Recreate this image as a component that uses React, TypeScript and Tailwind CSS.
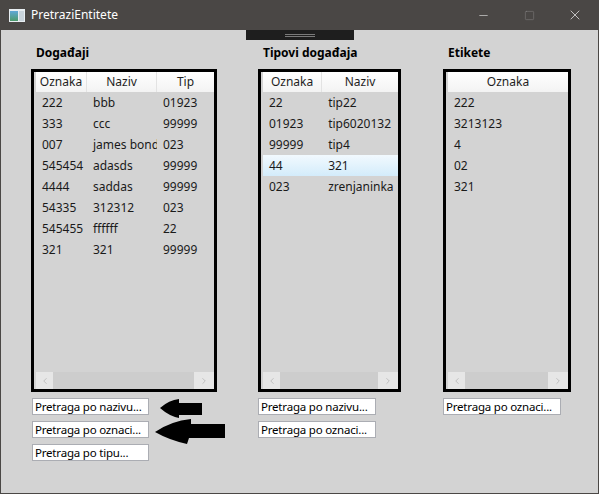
import { ChevronLeft, ChevronRight, Minus, Square, X } from 'lucide-react';

type Col = { title: string; width: number };

interface GridProps {
  columns: Col[];
  rows: string[][];
  selected?: number;
}

function Grid({ columns, rows, selected }: GridProps) {
  return (
    <div className="flex h-[323px] flex-col border-[3px] border-black pl-[2px]">
      <div className="flex h-[20px] bg-gradient-to-b from-white to-[#f3f3f3]">
        {columns.map((col, i) => (
          <div
            key={col.title}
            style={{ width: col.width }}
            className={`flex items-center justify-center text-[12px] text-[#1e1e1e] ${
              i < columns.length - 1 ? 'border-r border-[#e3e3e3]' : ''
            }`}
          >
            {col.title}
          </div>
        ))}
      </div>
      <div className="flex-1">
        {rows.map((row, r) => (
          <div
            key={r}
            className={`flex h-[21px] items-center text-[12px] text-[#1a1a1a] ${
              r === selected ? 'bg-gradient-to-b from-[#f2f9fe] to-[#d3ecfb]' : ''
            }`}
          >
            {row.map((cell, c) => (
              <div key={c} style={{ width: columns[c].width }} className="overflow-hidden pl-[6px] whitespace-nowrap">
                {cell}
              </div>
            ))}
          </div>
        ))}
      </div>
      <div className="flex h-[17px] bg-[#cdcdcd]">
        <div className="flex w-[17px] items-center justify-center bg-[#e6e6e6] text-[#a8a8a8]">
          <ChevronLeft size={10} strokeWidth={1.5} />
        </div>
        <div className="flex-1" />
        <div className="flex w-[20px] items-center justify-center bg-[#e6e6e6] text-[#a8a8a8]">
          <ChevronRight size={10} strokeWidth={1.5} />
        </div>
      </div>
    </div>
  );
}

function SearchBox({ text, width }: { text: string; width: number }) {
  return (
    <div
      style={{ width }}
      className="flex h-[17px] items-center overflow-hidden border border-[#abadb3] bg-white pl-[2px] text-[11.5px] leading-none tracking-[-0.2px] text-black whitespace-nowrap"
    >
      {text}
    </div>
  );
}

export default function App() {
  return (
    <div
      className="relative flex h-[494px] w-[599px] flex-col border-x border-b border-[#4a4745] bg-[#d3d3d3]"
      style={{ fontFamily: '"Noto Sans", "Open Sans", sans-serif' }}
    >
      <div className="flex h-[30px] shrink-0 items-center bg-[#4a4745] text-white">
        <svg width="16" height="13" viewBox="0 0 16 13" className="ml-[8px]">
          <defs>
            <linearGradient id="ic" x1="0" y1="0" x2="0" y2="1">
              <stop offset="0" stopColor="#5fa8d8" />
              <stop offset="1" stopColor="#4c9a6a" />
            </linearGradient>
          </defs>
          <rect x="0" y="0" width="16" height="13" fill="#e8eef2" />
          <rect x="1" y="2" width="8" height="10" fill="url(#ic)" />
          <rect x="10" y="2" width="5" height="10" fill="#c9d4dc" />
        </svg>
        <span className="ml-[6px] text-[12px]">PretraziEntitete</span>
        <div className="ml-auto flex h-full">
          <div className="flex w-[46px] items-center justify-center">
            <Minus size={13} strokeWidth={1} />
          </div>
          <div className="flex w-[46px] items-center justify-center text-[#8c8b8a]">
            <Square size={11} strokeWidth={1} />
          </div>
          <div className="flex w-[46px] items-center justify-center">
            <X size={16} strokeWidth={1} />
          </div>
        </div>
      </div>

      <div className="absolute left-[245px] top-[30px] flex h-[10px] w-[108px] flex-col items-center justify-center gap-[1px] bg-[#1e1e1e]">
        <div className="h-px w-[30px] bg-[#7a7a7a]" />
        <div className="h-px w-[30px] bg-[#7a7a7a]" />
      </div>

      <div className="flex pl-[30px] pt-[15px]">
        <div className="flex w-[186px] flex-col">
          <div className="mb-[8px] h-[16px] pl-[5px] text-[12px] font-bold leading-[16px] text-black">Događaji</div>
          <Grid
            columns={[
              { title: 'Oznaka', width: 51 },
              { title: 'Naziv', width: 70 },
              { title: 'Tip', width: 57 },
            ]}
            rows={[
              ['222', 'bbb', '01923'],
              ['333', 'ccc', '99999'],
              ['007', 'james bond', '023'],
              ['545454', 'adasds', '99999'],
              ['4444', 'saddas', '99999'],
              ['54335', '312312', '023'],
              ['545455', 'ffffff', '22'],
              ['321', '321', '99999'],
            ]}
          />
          <div className="mt-[6px] flex flex-col gap-[6px] pl-px">
            <SearchBox text="Pretraga po nazivu..." width={117} />
            <SearchBox text="Pretraga po oznaci..." width={117} />
            <SearchBox text="Pretraga po tipu..." width={117} />
          </div>
        </div>

        <div className="ml-[41px] flex w-[143px] flex-col">
          <div className="mb-[8px] h-[16px] pl-[5px] text-[12px] font-bold leading-[16px] text-black">
            Tipovi događaja
          </div>
          <Grid
            columns={[
              { title: 'Oznaka', width: 60 },
              { title: 'Naziv', width: 77 },
            ]}
            rows={[
              ['22', 'tip22'],
              ['01923', 'tip6020132'],
              ['99999', 'tip4'],
              ['44', '321'],
              ['023', 'zrenjaninka'],
            ]}
            selected={3}
          />
          <div className="mt-[6px] flex flex-col gap-[6px]">
            <SearchBox text="Pretraga po nazivu..." width={118} />
            <SearchBox text="Pretraga po oznaci..." width={118} />
          </div>
        </div>

        <div className="ml-[42px] flex w-[128px] flex-col">
          <div className="mb-[8px] h-[16px] pl-[5px] text-[12px] font-bold leading-[16px] text-black">Etikete</div>
          <Grid columns={[{ title: 'Oznaka', width: 122 }]} rows={[['222'], ['3213123'], ['4'], ['02'], ['321']]} />
          <div className="mt-[6px] flex flex-col">
            <SearchBox text="Pretraga po oznaci..." width={118} />
          </div>
        </div>
      </div>

      <svg className="absolute left-0 top-0" width="599" height="494" style={{ pointerEvents: 'none' }}>
        <path d="M159 408 Q168 400 178 399 L178 403 L201 403 L201 415 L178 415 L178 418 Q168 416 159 408 Z" fill="#000" />
        <path d="M154 432 Q170 421 190 419 L190 424 L224 424 L224 438 L188 438 L186 444 Q168 440 154 432 Z" fill="#000" />
      </svg>
    </div>
  );
}
